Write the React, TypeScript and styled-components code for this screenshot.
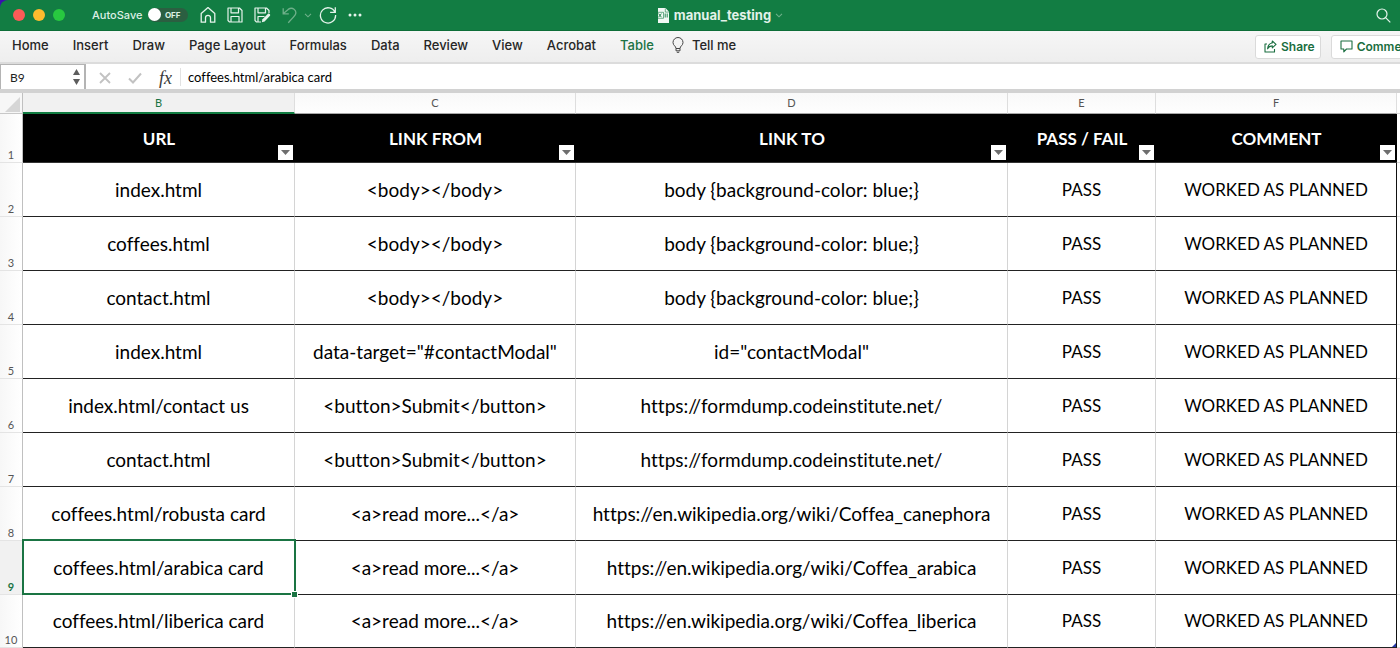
import React from "react";
import styled, { createGlobalStyle, css } from "styled-components";

const ui = `Inter, "Liberation Sans", sans-serif`;
const sheet = `Lato, "Liberation Sans", sans-serif`;
const green = "#107c41";

const GlobalStyle = createGlobalStyle`
  *, *::before, *::after { box-sizing: border-box; }
  body { margin: 0; background: #fff; font-family: ${ui}; overflow: hidden; }
  button, input { font: inherit; color: inherit; border: 0; padding: 0; margin: 0; background: none; }
  svg { display: block; flex: none; }
`;

const Window = styled.div`
  display: flex;
  flex-direction: column;
  background: #3b0fb0;
`;

const TitleBar = styled.header`
  display: grid;
  grid-template-columns: 1fr auto 1fr;
  align-items: center;
  height: 31px;
  padding: 0 9px 0 13px;
  border-bottom: 1px solid #0e6e39;
  border-top-left-radius: 8px;
  background: #127d43;
  color: #fff;
`;

const QuickAccess = styled.div`
  display: flex;
  align-items: center;
`;

const Lights = styled.div`
  display: flex;
  gap: 8px;
  margin-right: 27px;
`;

const Light = styled.button<{ $color: string }>`
  width: 12px;
  height: 12px;
  border-radius: 50%;
  background: ${(p) => p.$color};
`;

const AutoSave = styled.label`
  display: flex;
  align-items: center;
  gap: 6px;
  margin-right: 12px;
  font-size: 11px;
  font-weight: 500;
  color: #dcefe3;
`;

const Switch = styled.span`
  position: relative;
  display: flex;
  align-items: center;
  justify-content: flex-end;
  width: 40px;
  height: 14px;
  padding-right: 8px;
  border-radius: 7px;
  background: #2b5f41;
  font-size: 8px;
  font-weight: 700;

  input {
    position: absolute;
    inset: 0 auto auto 0;
    width: 13px;
    height: 13px;
    appearance: none;
    border-radius: 50%;
    background: #fff;
  }
`;

const Tools = styled.div`
  display: flex;
  align-items: center;
  gap: 11px;
`;

const IconButton = styled.button<{ $dim?: boolean }>`
  display: flex;
  align-items: center;
  justify-content: center;
  color: ${(p) => (p.$dim ? "#6fb08a" : "#e6f4ec")};
`;

const UndoGroup = styled.div`
  display: flex;
  align-items: center;
  gap: 7px;
`;

const DocTitle = styled.div`
  display: flex;
  align-items: center;
  gap: 4px;
  padding-left: 36px;
`;

const DocName = styled.h1`
  margin: 0;
  font-size: 13px;
  line-height: 16px;
  font-weight: 700;
  color: #e3f2e9;
`;

const SearchButton = styled(IconButton)`
  justify-self: end;
`;

const Ribbon = styled.div`
  display: flex;
  align-items: center;
  justify-content: space-between;
  height: 33px;
  border-bottom: 2px solid #dcdcdc;
  background: linear-gradient(#f6f6f6, #eeeeee);
`;

const Tabs = styled.nav`
  display: flex;
  align-items: center;
  gap: 24px;
  padding: 0 0 4px 12px;
`;

const Tab = styled.button<{ $active?: boolean }>`
  display: flex;
  align-items: center;
  gap: 8px;
  font-size: 13px;
  line-height: 16px;
  font-weight: 500;
  white-space: nowrap;
  color: ${(p) => (p.$active ? "#1c7344" : "#262626")};
`;

const TellMe = styled(Tab)`
  margin-left: -6px;
`;

const Collab = styled.div`
  display: flex;
  flex: 0 0 145px;
  gap: 10px;
  overflow: hidden;
`;

const CollabButton = styled.button`
  display: flex;
  flex: none;
  align-items: center;
  gap: 4px;
  height: 24px;
  padding: 0 5px 0 8px;
  border: 1px solid #dadada;
  border-radius: 3px;
  background: #fff;
  font-size: 12px;
  font-weight: 600;
  color: #1a6e40;
`;

const FormulaBar = styled.div`
  display: flex;
  height: 29px;
  border-bottom: 4px solid #d2d2d2;
  background: #fff;
`;

const NameBox = styled.div`
  display: flex;
  align-items: center;
  width: 86px;
  border: 1px solid #b4b4b4;
  border-bottom: 0;
  border-right-width: 2px;

  input {
    flex: 1;
    min-width: 0;
    padding-left: 9px;
    font-family: ${sheet};
    font-size: 12px;
    color: #222;
  }
`;

const Stepper = styled.div`
  display: flex;
  flex-direction: column;
  gap: 4px;
  padding-right: 4px;
  color: #5d5d5d;

  button { display: block; }
`;

const FormulaTools = styled.div`
  display: flex;
  align-items: center;
  gap: 17px;
  padding: 2px 8px 0 13px;
  color: #c2c2c2;
`;

const FxButton = styled.button`
  font-family: "Liberation Serif", serif;
  font-style: italic;
  font-size: 18px;
  line-height: 20px;
  color: #3a3a3a;
`;

const FormulaInput = styled.input`
  flex: 1;
  min-width: 0;
  align-self: center;
  height: 18px;
  font-family: ${sheet};
  font-size: 13px;
  font-variant-ligatures: none;
  color: #000;

  && {
    padding-left: 7px;
    border-left: 1px solid #e2e2e2;
  }
`;

const Grid = styled.table`
  width: 100%;
  table-layout: fixed;
  border-collapse: separate;
  border-spacing: 0;
  background: #fff;
  font-family: ${sheet};
  font-variant-ligatures: none;

  th, td { padding: 0; }
`;

const Corner = styled.td`
  height: 21px;
  border-right: 1px solid #c0c0c0;
  border-bottom: 1px solid #c8c8c8;
  background: #f7f7f7;

  svg { margin: 2px 2px 0 auto; }
`;

const ColumnLetter = styled.th<{ $active?: boolean }>`
  height: 21px;
  border-right: 1px solid #dedede;
  border-bottom: 1px solid #a8a8a8;
  background: linear-gradient(#f9f9f9, #fefefe);
  font-size: 11px;
  line-height: 16px;
  font-weight: 400;
  color: #555;
  ${(p) =>
    p.$active &&
    css`
      border-bottom: 2px solid ${green};
      background: #f1f1f1;
      color: #1a7443;
    `}
`;

const RowNumber = styled.th<{ $active?: boolean }>`
  border-right: 1px solid #c0c0c0;
  border-bottom: 1px solid #e4e4e4;
  background: ${(p) => (p.$active ? "#f1f1f1" : "linear-gradient(90deg, #f7f7f7, #fff)")};
  font-size: 11px;
  line-height: 14px;
  font-weight: ${(p) => (p.$active ? 700 : 400)};
  color: ${(p) => (p.$active ? "#1a7443" : "#555")};
  vertical-align: bottom;
`;

const HeaderCell = styled.th`
  position: relative;
  height: 49px;
  border-top: 1px solid #000;
  border-bottom: 1px solid #333;
  background: #000;
  font-size: 17px;
  line-height: 24px;
  font-weight: 700;
  color: #fff;
`;

const FilterButton = styled.button`
  position: absolute;
  right: 2px;
  bottom: 2px;
  display: flex;
  align-items: center;
  justify-content: center;
  width: 15px;
  height: 15px;
  background: #fff;
  color: #6e6e6e;
`;

const Row = styled.tr`
  height: 54px;

  &:last-child { height: 53px; }
`;

const Cell = styled.td<{ $selected?: boolean; $edge?: boolean; $caps?: boolean }>`
  position: relative;
  border-right: 1px solid ${(p) => (p.$edge ? "#111" : "#d4d4d4")};
  border-bottom: 1px solid #222;
  font-size: ${(p) => (p.$caps ? 17 : 19)}px;
  line-height: 24px;
  text-align: center;
  white-space: nowrap;
  color: #000;
  ${(p) =>
    p.$selected &&
    css`
      z-index: 1;
      &::before {
        content: "";
        position: absolute;
        inset: -2px -2px -1px -1px;
        border: 2px solid #1a7443;
      }
    `}
`;

const FillHandle = styled.span`
  position: absolute;
  right: -4px;
  bottom: -4px;
  width: 7px;
  height: 7px;
  border: 1px solid #fff;
  background: #1a7443;
`;

const TableHandle = styled.span`
  position: absolute;
  right: 0;
  bottom: 0;
  border: 2px solid #2438a8;
  border-top-color: transparent;
  border-left-color: transparent;
`;

const Blank = styled.td`
  border-bottom: 1px solid #d8d8d8;
`;

const HomeIcon = () => (
  <svg width="16" height="18" viewBox="0 0 16 18" fill="none" stroke="currentColor" strokeWidth="1.3" strokeLinejoin="round">
    <path d="M1.2 7.6 8 1.6l6.800 6v8.600h-4.300v-4.400a2.500 2.500 0 0 0-5 0v4.400H1.200z" />
  </svg>
);

const SaveIcon = () => (
  <svg width="16" height="16" viewBox="0 0 16 16" fill="none" stroke="currentColor" strokeWidth="1.2" strokeLinejoin="round">
    <path d="M1 1h11.500L15 3.500V15H2.500L1 13.500zM4 1v4.800h7.500V1M4 15V9.500h8V15" />
  </svg>
);

const SaveEditIcon = () => (
  <svg width="17" height="16" viewBox="0 0 17 16" fill="none" stroke="currentColor" strokeWidth="1.2" strokeLinejoin="round">
    <path d="M7 15H2.500L1 13.500V1h11.500L15 3.500V6M4 1v4.800h7.500V1M4 15V9.500h6.500" />
    <path d="m7.800 15.300.7-3L14 6.800c1.300-.7 2.700.7 2 2l-5.400 5.600z" fill="currentColor" stroke="none" />
  </svg>
);

const UndoIcon = () => (
  <svg width="15" height="17" viewBox="0 0 15 17" fill="none" stroke="currentColor" strokeWidth="1.3">
    <path d="M1.200 1.200v5.600h5.600M1.400 6.600 6.200 2.400c4.200-3 9 .8 7.200 5.200-.5 1.200-3 3.800-7.200 8.200" />
  </svg>
);

const RedoIcon = () => (
  <svg width="18" height="18" viewBox="0 0 18 18" fill="none" stroke="currentColor" strokeWidth="1.3">
    <path d="M16 6.400A7.600 7.600 0 1 0 16.600 9M16.300 1.200v5.200h-5.200" />
  </svg>
);

const Chevron = () => (
  <svg width="8" height="5" viewBox="0 0 8 5" fill="none" stroke="currentColor" strokeWidth="1.1">
    <path d="m1 .8 3 3 3-3" />
  </svg>
);

const DotsIcon = () => (
  <svg width="14" height="4" viewBox="0 0 14 4" fill="currentColor">
    <circle cx="2" cy="2" r="1.500" />
    <circle cx="7" cy="2" r="1.500" />
    <circle cx="12" cy="2" r="1.500" />
  </svg>
);

const FileIcon = () => (
  <svg width="13" height="15" viewBox="0 0 13 15">
    <path d="M1 0h7.500L12 3.700V15H1z" fill="#f1f8f4" />
    <path d="M8.300.5v3.600h3.500" fill="none" stroke={green} strokeWidth=".6" />
    <path d="M0 4.300h6.500v6H0" fill="none" stroke={green} strokeWidth=".6" />
    <path d="m1.600 5.600 2.800 3.600M4.400 5.600 1.600 9.200M8.200 5.500v4M10.200 5.500v4" fill="none" stroke={green} strokeWidth=".9" />
  </svg>
);

const SearchIcon = () => (
  <svg width="15" height="15" viewBox="0 0 15 15" fill="none" stroke="currentColor" strokeWidth="1.200">
    <circle cx="6" cy="6" r="5" />
    <path d="m9.600 9.600 4.700 4.700" />
  </svg>
);

const BulbIcon = () => (
  <svg width="12" height="16" viewBox="0 0 12 16" fill="none" stroke="#444" strokeWidth="1">
    <path d="M4 11.500C4 9 1 8.600 1 5.500a5 5 0 0 1 10 0C11 8.600 8 9 8 11.500zM4 11.500v2.300h4v-2.300M4.800 15.300h2.400" />
  </svg>
);

const ShareIcon = () => (
  <svg width="13" height="13" viewBox="0 0 13 13" fill="none" stroke="currentColor" strokeWidth="1.100" strokeLinejoin="round">
    <path d="M3 4H1v8h9.500V9" />
    <path d="M8.300 1 12 4.400 8.300 7.800V5.900C6 5.900 4.700 6.800 3.600 8.800 3.900 5.300 5.500 3.300 8.300 2.900z" />
  </svg>
);

const CommentIcon = () => (
  <svg width="13" height="13" viewBox="0 0 13 13" fill="none" stroke="currentColor" strokeWidth="1.100" strokeLinejoin="round">
    <path d="M1 1h11v8H6.500L3.800 11.800V9H1z" />
  </svg>
);

const Triangle = ({ up, w = 8, h = 5 }: { up?: boolean; w?: number; h?: number }) => (
  <svg width={w} height={h} viewBox="0 0 8 5" preserveAspectRatio="none" fill="currentColor">
    <path d={up ? "M0 5h8L4 0z" : "M0 0h8L4 5z"} />
  </svg>
);

const CancelIcon = () => (
  <svg width="12" height="12" viewBox="0 0 12 12" stroke="currentColor" strokeWidth="1.800">
    <path d="m1 1 10 10M11 1 1 11" />
  </svg>
);

const AcceptIcon = () => (
  <svg width="14" height="12" viewBox="0 0 14 12" fill="none" stroke="currentColor" strokeWidth="2">
    <path d="m1 6.500 4 4L13 1.500" />
  </svg>
);

const tabs = ["Home", "Insert", "Draw", "Page Layout", "Formulas", "Data", "Review", "View", "Acrobat", "Table"];

const columns = [
  { letter: "B", title: "URL", width: 272 },
  { letter: "C", title: "LINK FROM", width: 281 },
  { letter: "D", title: "LINK TO", width: 432 },
  { letter: "E", title: "PASS / FAIL", width: 148, caps: true },
  { letter: "F", title: "COMMENT", width: 241, caps: true },
];

const body = ["<body></body>", "body {background-color: blue;}"];
const submit = ["<button>Submit</button>", "https://formdump.codeinstitute.net/"];
const more = "<a>read more...</a>";
const wiki = "https://en.wikipedia.org/wiki/";

const rows = [
  ["index.html", ...body],
  ["coffees.html", ...body],
  ["contact.html", ...body],
  ["index.html", 'data-target="#contactModal"', 'id="contactModal"'],
  ["index.html/contact us", ...submit],
  ["contact.html", ...submit],
  ["coffees.html/robusta card", more, wiki + "Coffea_canephora"],
  ["coffees.html/arabica card", more, wiki + "Coffea_arabica"],
  ["coffees.html/liberica card", more, wiki + "Coffea_liberica"],
].map((r) => [...r, "PASS", "WORKED AS PLANNED"]);

const selectedRow = 9;

export default function App() {
  return (
    <Window>
      <GlobalStyle />
      <TitleBar>
        <QuickAccess>
          <Lights>
            <Light $color="#fc5b57" aria-label="Close" />
            <Light $color="#fdbc2e" aria-label="Minimize" />
            <Light $color="#28c840" aria-label="Zoom" />
          </Lights>
          <AutoSave>
            AutoSave
            <Switch>
              <input type="checkbox" role="switch" />
              OFF
            </Switch>
          </AutoSave>
          <Tools>
            <IconButton aria-label="Home"><HomeIcon /></IconButton>
            <IconButton aria-label="Save"><SaveIcon /></IconButton>
            <IconButton aria-label="Save as"><SaveEditIcon /></IconButton>
            <UndoGroup>
              <IconButton $dim aria-label="Undo"><UndoIcon /></IconButton>
              <IconButton $dim aria-label="Undo history"><Chevron /></IconButton>
              <IconButton aria-label="Redo"><RedoIcon /></IconButton>
            </UndoGroup>
            <IconButton aria-label="More"><DotsIcon /></IconButton>
          </Tools>
        </QuickAccess>
        <DocTitle>
          <FileIcon />
          <DocName>manual_testing</DocName>
          <IconButton $dim aria-label="Document options"><Chevron /></IconButton>
        </DocTitle>
        <SearchButton aria-label="Search"><SearchIcon /></SearchButton>
      </TitleBar>

      <Ribbon>
        <Tabs>
          {tabs.map((t) => (
            <Tab key={t} $active={t === "Table"}>{t}</Tab>
          ))}
          <TellMe><BulbIcon />Tell me</TellMe>
        </Tabs>
        <Collab>
          <CollabButton><ShareIcon />Share</CollabButton>
          <CollabButton><CommentIcon />Comments</CollabButton>
        </Collab>
      </Ribbon>

      <FormulaBar>
        <NameBox>
          <input type="text" aria-label="Name box" defaultValue="B9" />
          <Stepper>
            <button aria-label="Previous"><Triangle up w={7} h={6} /></button>
            <button aria-label="Next"><Triangle w={7} h={6} /></button>
          </Stepper>
        </NameBox>
        <FormulaTools>
          <button aria-label="Cancel"><CancelIcon /></button>
          <button aria-label="Enter"><AcceptIcon /></button>
          <FxButton aria-label="Insert function">fx</FxButton>
        </FormulaTools>
        <FormulaInput type="text" aria-label="Formula" defaultValue="coffees.html/arabica card" />
      </FormulaBar>

      <Grid>
        <colgroup>
          <col width={23} />
          {columns.map((c) => <col key={c.letter} width={c.width} />)}
          <col width={3} />
        </colgroup>
        <thead>
          <tr>
            <Corner>
              <svg width="15" height="15" viewBox="0 0 15 15" fill="#d6d6d6"><path d="M15 0v15H0z" /></svg>
            </Corner>
            {columns.map((c) => (
              <ColumnLetter key={c.letter} scope="col" $active={c.letter === "B"}>{c.letter}</ColumnLetter>
            ))}
            <Blank />
          </tr>
          <tr>
            <RowNumber scope="row">1</RowNumber>
            {columns.map((c) => (
              <HeaderCell key={c.letter} scope="col">
                {c.title}
                <FilterButton aria-label={`Filter ${c.title}`}><Triangle w={9} h={5} /></FilterButton>
              </HeaderCell>
            ))}
            <Blank />
          </tr>
        </thead>
        <tbody>
          {rows.map((r, i) => {
            const n = i + 2;
            return (
              <Row key={n}>
                <RowNumber scope="row" $active={n === selectedRow}>{n}</RowNumber>
                {r.map((v, j) => {
                  const selected = n === selectedRow && j === 0;
                  const edge = j === r.length - 1;
                  return (
                    <Cell key={j} $selected={selected} $edge={edge} $caps={columns[j].caps}>
                      {v}
                      {selected && <FillHandle />}
                      {edge && i === rows.length - 1 && <TableHandle />}
                    </Cell>
                  );
                })}
                <Blank />
              </Row>
            );
          })}
        </tbody>
      </Grid>
    </Window>
  );
}
